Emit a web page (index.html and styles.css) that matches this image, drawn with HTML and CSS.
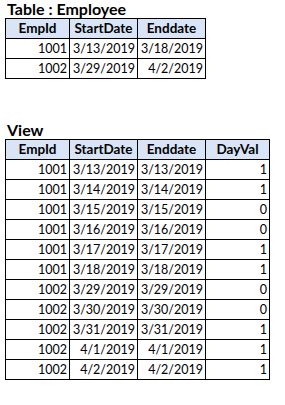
FILE: index.html
```html
<!DOCTYPE html>
<html>
<head>
<meta charset="utf-8">
<link rel="stylesheet" href="styles.css">
</head>
<body>
<div class="page">
  <section class="block">
    <div class="title">Table : Employee</div>
    <table class="grid grid-3">
      <colgroup><col class="c1"><col class="c2"><col class="c3"></colgroup>
      <thead>
        <tr><th>EmpId</th><th>StartDate</th><th>Enddate</th></tr>
      </thead>
      <tbody>
        <tr><td>1001</td><td>3/13/2019</td><td>3/18/2019</td></tr>
        <tr><td>1002</td><td>3/29/2019</td><td>4/2/2019</td></tr>
      </tbody>
    </table>
  </section>
  <section class="block view">
    <div class="title">View</div>
    <table class="grid grid-4">
      <colgroup><col class="c1"><col class="c2"><col class="c3"><col class="c4"></colgroup>
      <thead>
        <tr><th>EmpId</th><th>StartDate</th><th>Enddate</th><th>DayVal</th></tr>
      </thead>
      <tbody>
        <tr><td>1001</td><td>3/13/2019</td><td>3/13/2019</td><td>1</td></tr>
        <tr><td>1001</td><td>3/14/2019</td><td>3/14/2019</td><td>1</td></tr>
        <tr><td>1001</td><td>3/15/2019</td><td>3/15/2019</td><td>0</td></tr>
        <tr><td>1001</td><td>3/16/2019</td><td>3/16/2019</td><td>0</td></tr>
        <tr><td>1001</td><td>3/17/2019</td><td>3/17/2019</td><td>1</td></tr>
        <tr><td>1001</td><td>3/18/2019</td><td>3/18/2019</td><td>1</td></tr>
        <tr><td>1002</td><td>3/29/2019</td><td>3/29/2019</td><td>0</td></tr>
        <tr><td>1002</td><td>3/30/2019</td><td>3/30/2019</td><td>0</td></tr>
        <tr><td>1002</td><td>3/31/2019</td><td>3/31/2019</td><td>1</td></tr>
        <tr><td>1002</td><td>4/1/2019</td><td>4/1/2019</td><td>1</td></tr>
        <tr><td>1002</td><td>4/2/2019</td><td>4/2/2019</td><td>1</td></tr>
      </tbody>
    </table>
  </section>
</div>
</body>
</html>
```
FILE: styles.css
```css
html, body {
  margin: 0;
  padding: 0;
  background: #ffffff;
}
.page {
  font-family: Lato, "Open Sans", sans-serif;
  font-size: 12px;
  color: #000;
  padding: 0 0 0 5px;
  display: flex;
  flex-direction: column;
  align-items: flex-start;
}
.block {
  display: flex;
  flex-direction: column;
  align-items: flex-start;
}
.view {
  margin-top: 42px;
}
.title {
  font-weight: bold;
  font-size: 16px;
  height: 18px;
  line-height: 18px;
  padding-left: 2px;
}
.grid {
  border-collapse: collapse;
  table-layout: fixed;
}
.grid-3 { width: 201px; }
.grid-4 { width: 265px; }
.c1 { width: 64px; }
.c2 { width: 68px; }
.c3 { width: 68px; }
.c4 { width: 64px; }
.grid th, .grid td {
  border: 1px solid #000;
  height: 19px;
  padding: 0 2px 0 2px;
  line-height: 19px;
  box-sizing: border-box;
  white-space: nowrap;
  overflow: hidden;
}
.grid th {
  font-weight: bold;
  font-size: 13.5px;
  text-align: center;
  padding: 0 1px;
  background-color: #d6e3f4;
  background-image: conic-gradient(#c4d7f0 25%, #eef3fb 0 50%, #c4d7f0 0 75%, #eef3fb 0);
  background-size: 2px 2px;
}
.grid td {
  font-size: 12.5px;
  text-align: right;
}
```
